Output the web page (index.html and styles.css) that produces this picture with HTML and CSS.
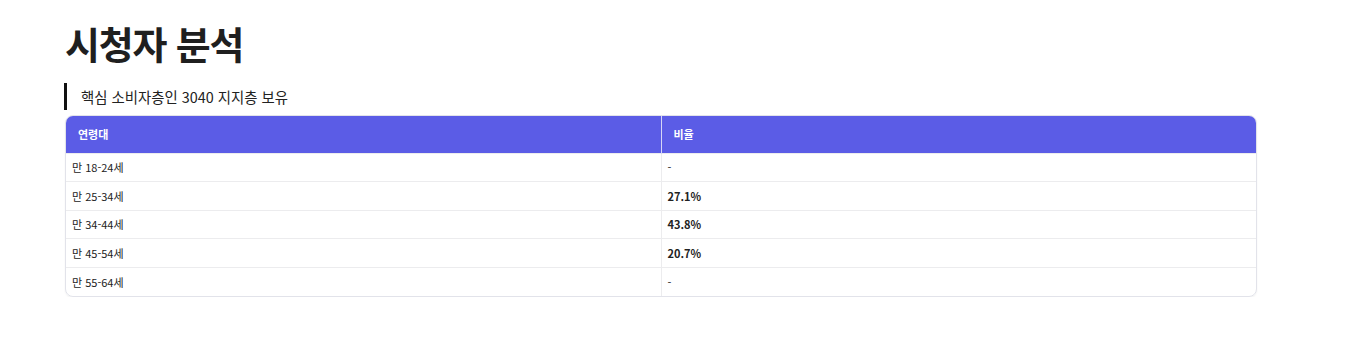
FILE: index.html
```html
<!DOCTYPE html>
<html lang="ko">
<head>
<meta charset="utf-8">
<link rel="stylesheet" href="styles.css">
</head>
<body>
<main class="page">
  <h1 class="title">시청자 분석</h1>
  <blockquote class="note">핵심 소비자층인 3040 지지층 보유</blockquote>
  <div class="table-wrap">
    <table class="data">
      <thead>
        <tr><th>연령대</th><th>비율</th></tr>
      </thead>
      <tbody>
        <tr><td>만 18-24세</td><td>-</td></tr>
        <tr><td>만 25-34세</td><td><strong>27.1%</strong></td></tr>
        <tr><td>만 34-44세</td><td><strong>43.8%</strong></td></tr>
        <tr><td>만 45-54세</td><td><strong>20.7%</strong></td></tr>
        <tr><td>만 55-64세</td><td>-</td></tr>
      </tbody>
    </table>
  </div>
</main>
</body>
</html>
```
FILE: styles.css
```css
* { box-sizing: border-box; }
html, body { margin: 0; padding: 0; background: #fff; }
body {
  font-family: "Noto Sans CJK KR", "Noto Sans", sans-serif;
  color: #222;
}
.page {
  width: 1192px;
  margin-left: 65px;
  padding-top: 14px;
}
.title {
  margin: 0;
  font-size: 38px;
  font-weight: 700;
  line-height: 58px;
  color: #1f1f1f;
  letter-spacing: -1.2px;
}
.note {
  margin: 11px 0 5px -1px;
  padding-left: 14px;
  border-left: 3px solid #111;
  font-size: 14.4px;
  line-height: 27px;
  color: #222;
}
.table-wrap {
  border: 1px solid #e2e3ea;
  border-radius: 8px;
  overflow: hidden;
  box-shadow: 0 1px 2px rgba(0,0,0,0.06);
}
.data {
  width: 100%;
  border-collapse: collapse;
  font-size: 11px;
}
.data th {
  background: #5b5ce6;
  color: #fff;
  font-weight: 700;
  text-align: left;
  height: 37px;
  padding: 0 12px;
  width: 50%;
}
.data th + th { border-left: 1px solid #d6d6f6; }
.data td {
  height: 28.6px;
  padding: 0 6px;
  border-top: 1px solid #ececee;
  color: #222;
}
.data td + td { border-left: 1px solid #ececee; }
.data strong { font-weight: 700; color: #222; }
```
